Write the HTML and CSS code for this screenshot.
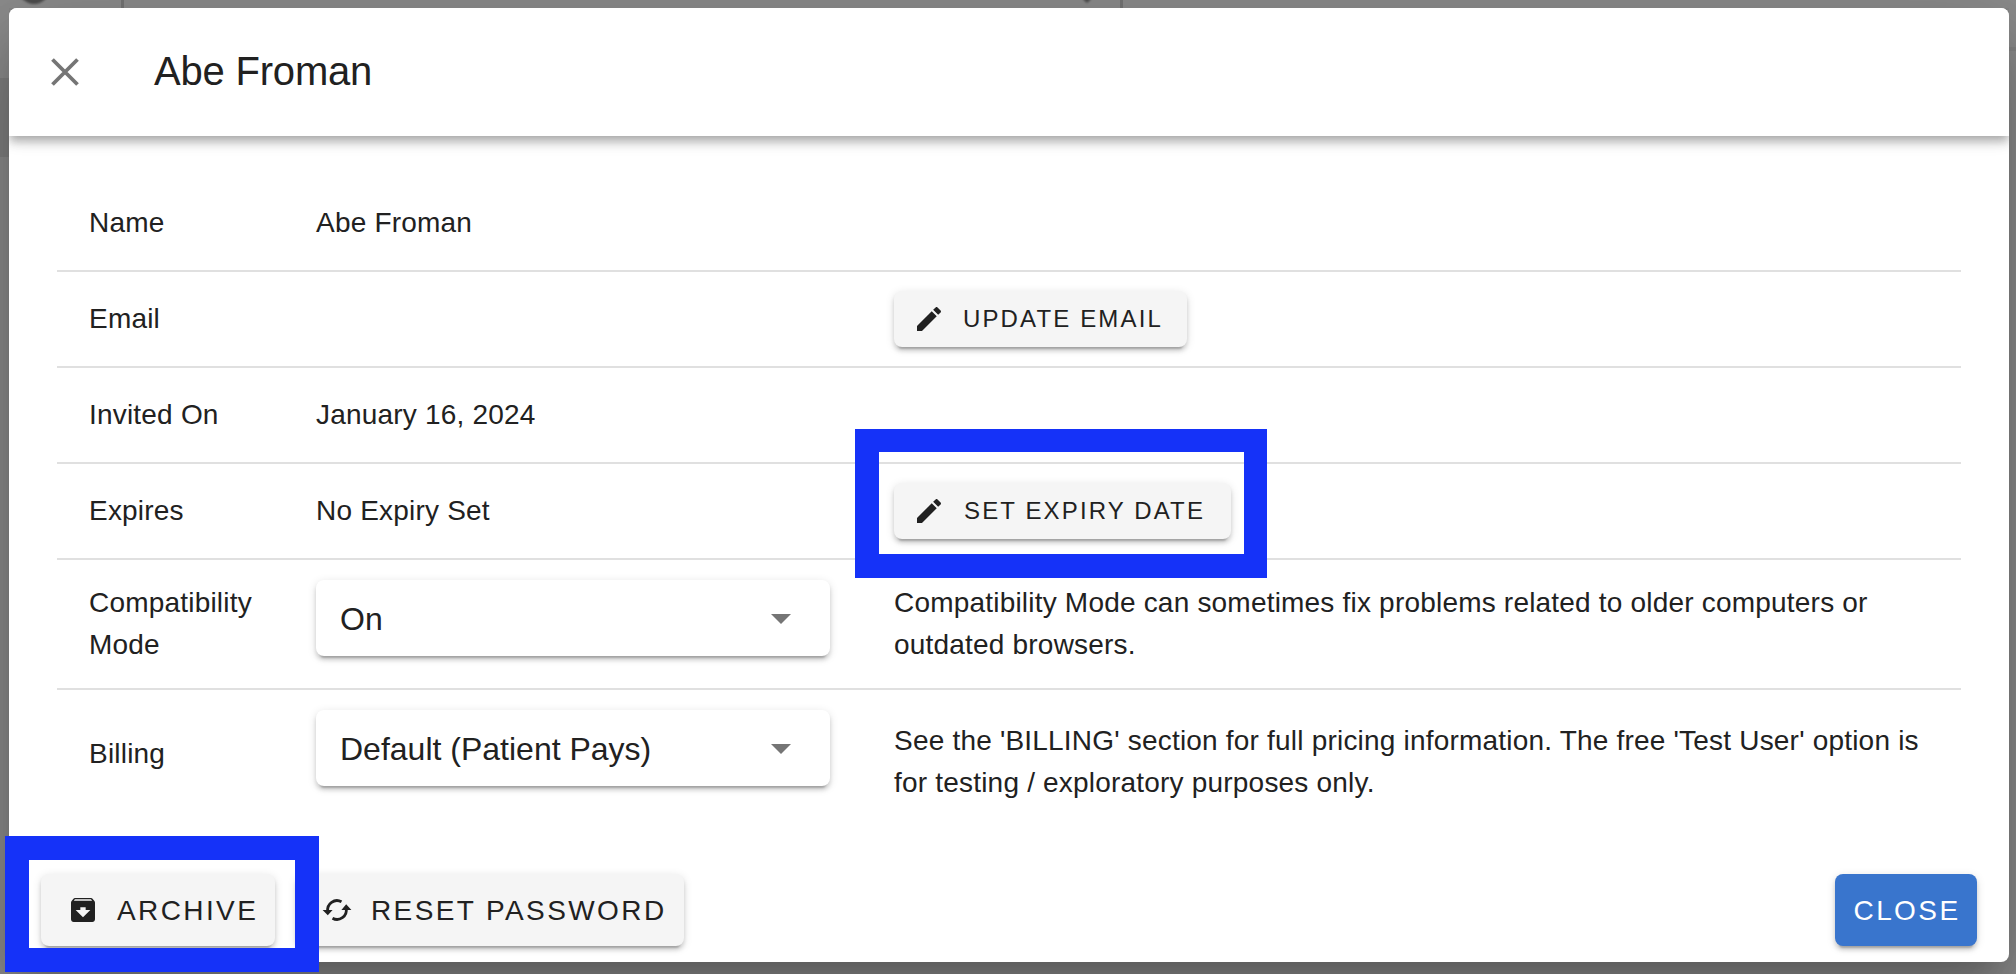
FILE: index.html
```
<!DOCTYPE html>
<html lang="en">
<head>
  <meta charset="UTF-8" />
  <meta name="viewport" content="width=device-width, initial-scale=1.0"/>
  <title>Abe Froman</title>
  <link rel="stylesheet" href="styles.css">
</head>
<body>

<div class="backdrop">
  <span class="bg-avatar"></span>
  <span class="bg-line left"></span>
  <span class="bg-arrow"></span>
  <span class="bg-line right"></span>
  <span class="bg-band"></span>
  <span class="bg-edge"></span>
</div>

<div class="dialog">
  <header class="toolbar">
    <button class="icon-btn" aria-label="Close">
      <svg viewBox="0 0 28 28"><path d="M1.5 1.5 26.5 26.5M26.5 1.5 1.5 26.5"/></svg>
    </button>
    <h1>Abe Froman</h1>
  </header>

  <div class="content">
    <div class="row">
      <div class="cell">Name</div>
      <div class="cell">Abe Froman</div>
      <div class="cell"></div>
    </div>
    <div class="row">
      <div class="cell">Email</div>
      <div class="cell"></div>
      <div class="cell">
        <button class="btn small update">
          <svg class="icon" viewBox="0 0 24 24"><path d="M20.71 7.04c.39-.39.39-1.04 0-1.41l-2.34-2.34c-.37-.39-1.02-.39-1.41 0l-1.84 1.83 3.75 3.75M3 17.25V21h3.75L17.81 9.93l-3.75-3.75L3 17.25z"/></svg>
          <span>UPDATE EMAIL</span>
        </button>
      </div>
    </div>
    <div class="row">
      <div class="cell">Invited On</div>
      <div class="cell">January 16, 2024</div>
      <div class="cell"></div>
    </div>
    <div class="row">
      <div class="cell">Expires</div>
      <div class="cell">No Expiry Set</div>
      <div class="cell">
        <button class="btn small expiry">
          <svg class="icon" viewBox="0 0 24 24"><path d="M20.71 7.04c.39-.39.39-1.04 0-1.41l-2.34-2.34c-.37-.39-1.02-.39-1.41 0l-1.84 1.83 3.75 3.75M3 17.25V21h3.75L17.81 9.93l-3.75-3.75L3 17.25z"/></svg>
          <span>SET EXPIRY DATE</span>
        </button>
        <span class="highlight expiry-mark"></span>
      </div>
    </div>
    <div class="row tall">
      <div class="cell">Compatibility<br>Mode</div>
      <div class="cell">
        <div class="select"><span>On</span><i class="caret"></i></div>
      </div>
      <div class="cell"><p>Compatibility Mode can sometimes fix problems related to older computers or<br>outdated browsers.</p></div>
    </div>
    <div class="row tall last">
      <div class="cell">Billing</div>
      <div class="cell">
        <div class="select"><span>Default (Patient Pays)</span><i class="caret"></i></div>
      </div>
      <div class="cell"><p class="billing-note">See the 'BILLING' section for full pricing information. The free 'Test User' option is<br>for testing / exploratory purposes only.</p></div>
    </div>
  </div>

  <footer class="actions">
    <div class="archive-wrap">
      <button class="btn archive">
        <svg class="icon" viewBox="0 0 24 24"><path d="M20.54 5.23l-1.39-1.68C18.88 3.21 18.47 3 18 3H6c-.47 0-.88.21-1.16.55L3.46 5.23C3.17 5.57 3 6.02 3 6.5V19c0 1.1.9 2 2 2h14c1.1 0 2-.9 2-2V6.5c0-.48-.17-.93-.46-1.27zM12 17.5 6.5 12H10v-2h4v2h3.5L12 17.5zM5.12 5l.81-1h12l.94 1H5.12z"/></svg>
        <span>ARCHIVE</span>
      </button>
      <span class="highlight archive-mark"></span>
    </div>
    <button class="btn reset">
      <svg class="icon sync" viewBox="0 0 32 32">
        <path class="arc" d="M6.8 17.5A9.3 9.3 0 0 1 20.5 7.8M25.2 14.5A9.3 9.3 0 0 1 11.5 24.2"/>
        <path d="M1.6 16h10L6.8 21.3zM20.4 16h10L25.2 10.2z"/>
      </svg>
      <span>RESET PASSWORD</span>
    </button>
    <button class="btn close"><span>CLOSE</span></button>
  </footer>
</div>

</body>
</html>
```
FILE: styles.css
```
* { box-sizing: border-box; }
body { margin: 0; height: 974px; overflow: hidden; background: #8c8c8c; color: #212121; font-family: "Liberation Sans", Arial, sans-serif; font-size: 28px; line-height: 42px; padding: 8px 7px 12px 9px; }
button { font-family: inherit; border: none; margin: 0; padding: 0; color: inherit; }
h1, p { margin: 0; }

/* page behind the dialog */
.backdrop { position: absolute; top: 0; left: 0; width: 2016px; height: 974px; overflow: hidden; }
.backdrop span { position: absolute; }
.bg-avatar { left: 18px; top: -28px; width: 32px; height: 32px; border-radius: 50%; background: #4c4c4c; filter: blur(1px); }
.bg-line { top: 0; width: 3px; height: 10px; background: #747474; }
.bg-line.left { left: 121px; }
.bg-line.right { left: 1120px; }
.bg-arrow { left: 1084px; top: -4px; width: 6px; height: 6px; background: #505050; transform: rotate(45deg); filter: blur(1px); }
.bg-band { left: 0; top: 78px; width: 10px; height: 79px; background: #808080; }
.bg-edge { right: 0; top: 47px; width: 8px; height: 4px; background: #848484; }

.dialog { position: relative; height: 954px; background: #fff; border-radius: 8px; box-shadow: 0 22px 30px -14px rgba(0,0,0,0.2), 0 48px 76px 6px rgba(0,0,0,0.14), 0 18px 92px 16px rgba(0,0,0,0.12); display: flex; flex-direction: column; }

.toolbar { height: 128px; flex: none; display: flex; align-items: center; padding: 0 42px 4px; background: #fff; border-radius: 8px 8px 0 0; box-shadow: 0 4px 8px -2px rgba(0,0,0,0.2), 0 8px 10px 0 rgba(0,0,0,0.14), 0 2px 20px 0 rgba(0,0,0,0.12); clip-path: inset(0 0 -40px 0); }
.toolbar h1 { font-size: 40px; font-weight: 400; line-height: 60px; letter-spacing: -0.2px; margin-left: 75px; padding-top: 1px; }
.icon-btn { width: 28px; height: 28px; background: none; margin-top: 4px; }
.icon-btn svg { display: block; width: 28px; height: 28px; fill: none; stroke: #757575; stroke-width: 3.8; }

.content { padding: 40px 48px 0; }
.row { display: grid; grid-template-columns: 227px 578px 1fr; height: 96px; border-bottom: 2px solid #e0e0e0; }
.row.tall { height: 130px; }
.row.last { height: 128px; border-bottom: none; }
.cell { padding: 0 32px; display: flex; align-items: center; position: relative; letter-spacing: 0.2px; white-space: nowrap; }
.billing-note { padding-top: 16px; }

.select { width: 514px; height: 76px; margin: 0 0 12px; padding: 1px 39px 0 24px; display: flex; align-items: center; justify-content: space-between; font-size: 32px; letter-spacing: 0; background: #fff; border-radius: 8px; box-shadow: 0 6px 2px -4px rgba(0,0,0,0.2), 0 4px 4px 0 rgba(0,0,0,0.14), 0 2px 10px 0 rgba(0,0,0,0.12); }
.caret { border: 10px solid transparent; border-top-color: #757575; border-bottom: none; }

.btn { display: flex; align-items: center; flex: none; height: 72px; background: #f5f5f5; border-radius: 8px; font-size: 28px; letter-spacing: 2.4px; white-space: nowrap; box-shadow: 0 6px 2px -4px rgba(0,0,0,0.2), 0 4px 4px 0 rgba(0,0,0,0.14), 0 2px 10px 0 rgba(0,0,0,0.12); }
.btn.small { height: 56px; font-size: 24px; letter-spacing: 2.14px; padding-left: 19px; }
.btn.update { width: 293px; }
.btn.expiry { width: 337px; }
.btn.expiry .icon { margin-right: 19px; }
.btn.archive { width: 234px; padding-left: 26px; }
.btn.reset { width: 388px; padding-left: 25px; margin-left: 21px; }
.btn.close { width: 142px; margin-left: auto; justify-content: center; padding-left: 2px; background: #3975cd; color: #fff; }
.archive span, .reset span, .close span { padding-top: 1px; }
.icon { width: 32px; height: 32px; fill: #212121; margin-right: 18px; flex: none; }
.sync .arc { fill: none; stroke: #212121; stroke-width: 2.8; }

.actions { display: flex; margin-top: auto; padding: 0 32px 16px; }
.archive-wrap { position: relative; }

/* annotation frames */
.highlight { position: absolute; border: 24px solid #1532f8; pointer-events: none; z-index: 2; }
.expiry-mark { left: -7px; top: -35px; width: 412px; height: 149px; border-width: 23px 23px 24px 24px; }
.archive-mark { left: -36px; top: -38px; width: 314px; height: 136px; }
```
